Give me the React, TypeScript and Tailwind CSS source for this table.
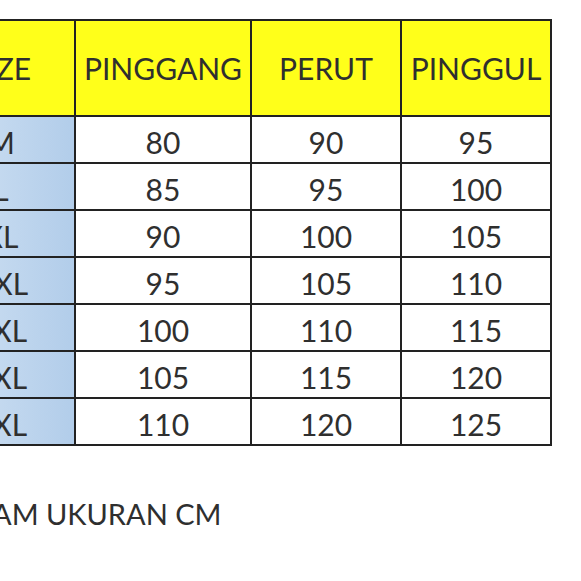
const rows = [
  ["M", "80", "90", "95"],
  ["L", "85", "95", "100"],
  ["XL", "90", "100", "105"],
  ["XXL", "95", "105", "110"],
  ["3XL", "100", "110", "115"],
  ["4XL", "105", "115", "120"],
  ["5XL", "110", "120", "125"],
]

const cell = "border-2 border-[#222] text-center"

export default function App() {
  return (
    <div className="h-[581px] w-[581px] overflow-hidden bg-white font-['Lato','Open_Sans',sans-serif] text-[#2f2f2f]">
      <table className="ml-[-74px] mt-[19px] border-collapse">
        <thead>
          <tr className="h-[96px] bg-[#ffff1a] text-[30px]">
            <th className={`${cell} w-[148px] font-normal`}>SIZE</th>
            <th className={`${cell} w-[176px] font-normal`}>PINGGANG</th>
            <th className={`${cell} w-[150px] font-normal`}>PERUT</th>
            <th className={`${cell} w-[150px] font-normal`}>PINGGUL</th>
          </tr>
        </thead>
        <tbody>
          {rows.map((r) => (
            <tr key={r[0]} className="h-[47px] text-[30px] leading-none">
              <td className={`${cell} bg-gradient-to-r from-[#d4e4f4] to-[#b2cdea] pt-[4px]`}>{r[0]}</td>
              <td className={`${cell} pt-[4px]`}>{r[1]}</td>
              <td className={`${cell} pt-[4px]`}>{r[2]}</td>
              <td className={`${cell} pt-[4px]`}>{r[3]}</td>
            </tr>
          ))}
        </tbody>
      </table>
      <p className="ml-[-64px] mt-[46px] whitespace-nowrap text-[29px]">DALAM UKURAN CM</p>
    </div>
  )
}
